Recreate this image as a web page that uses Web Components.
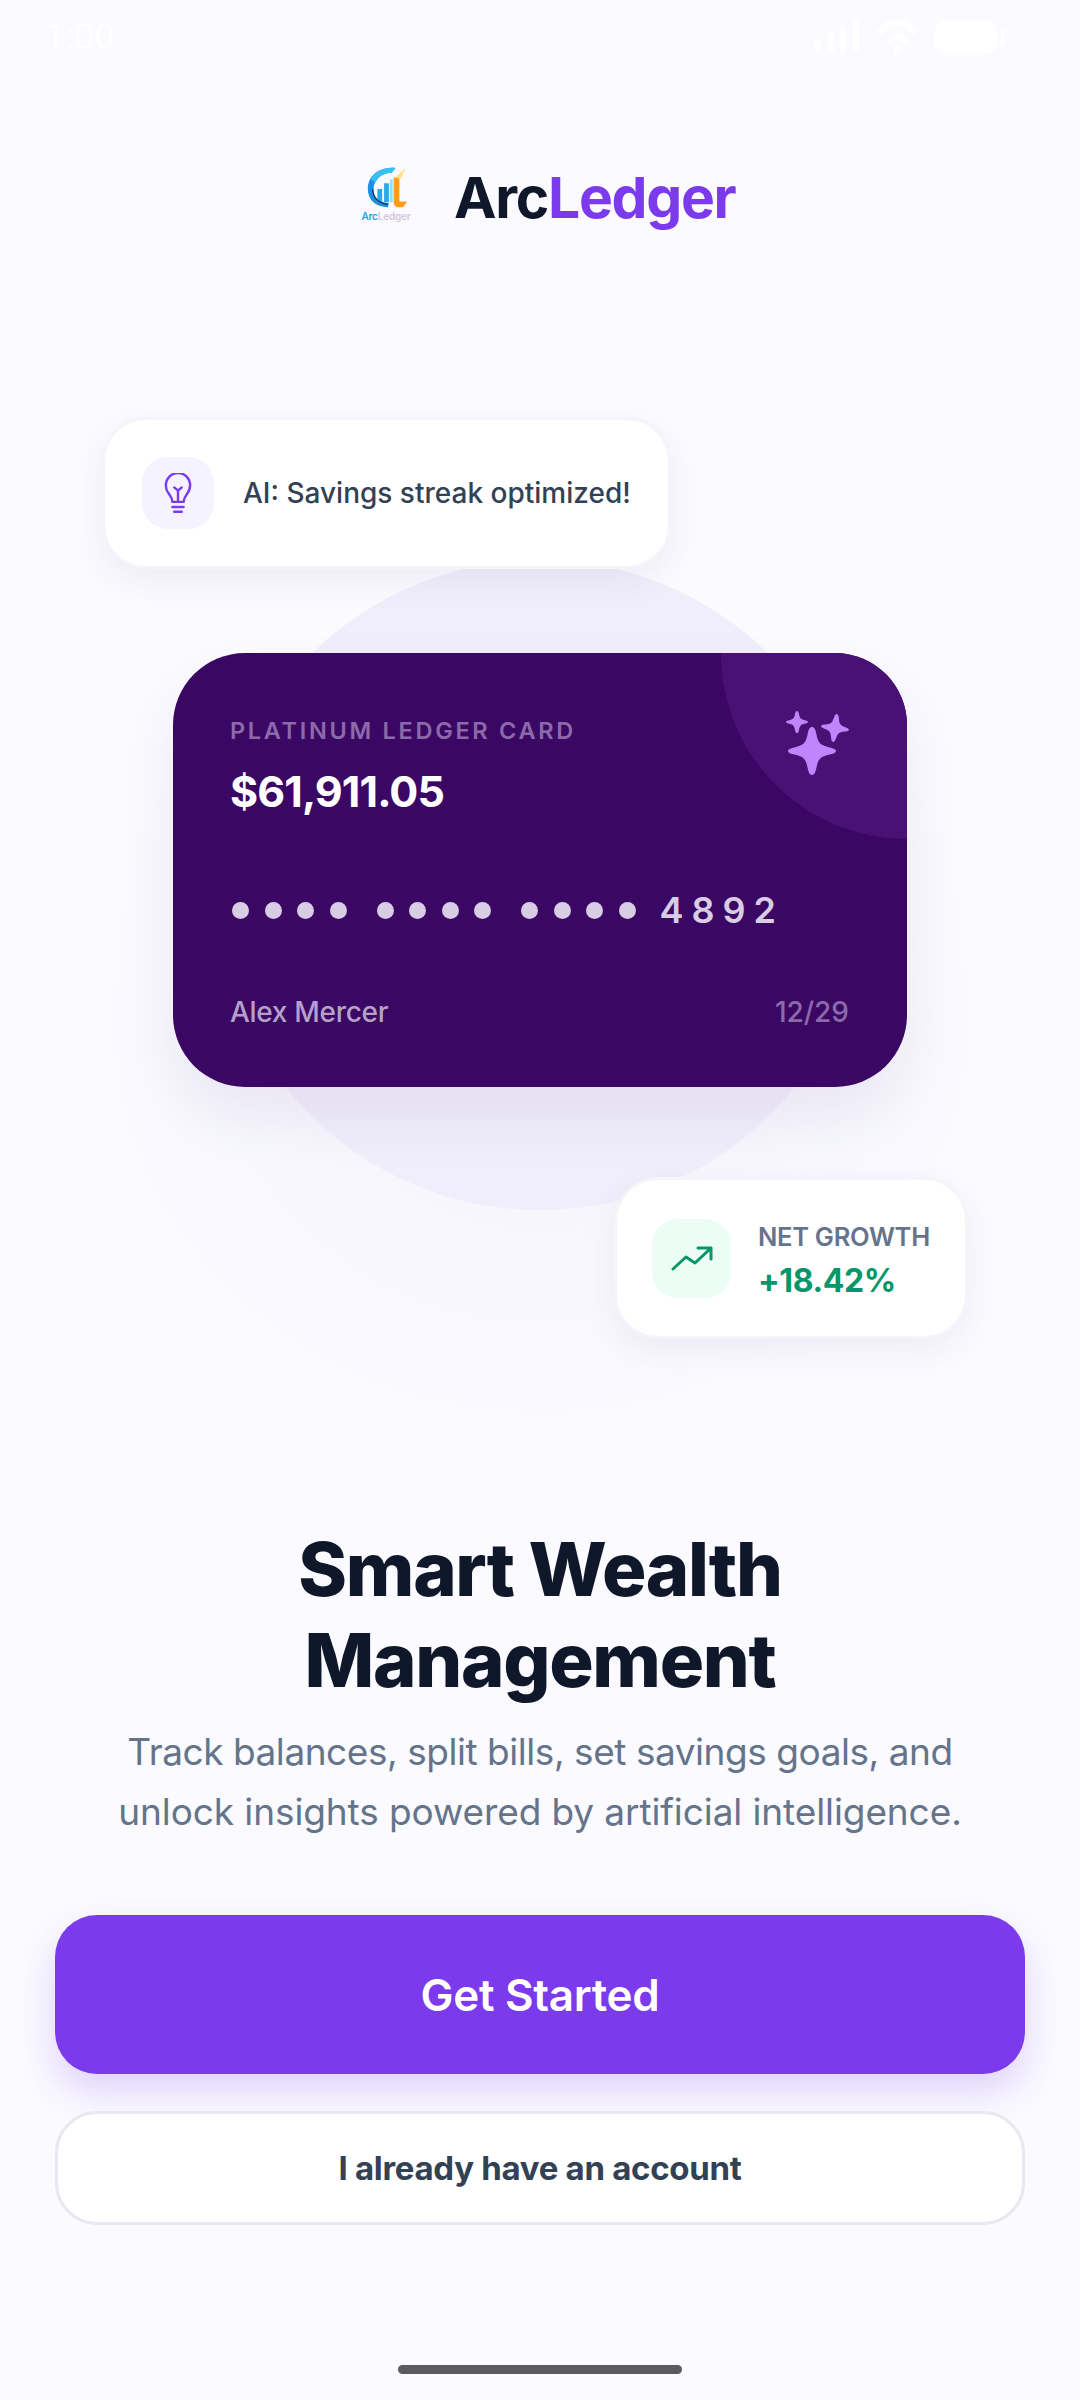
<!DOCTYPE html>
<html lang="en">
<head>
<meta charset="utf-8">
<title>ArcLedger</title>
<style>
  html, body { margin: 0; background: #fafaff; }
  body { font-family: Inter, "Noto Sans", sans-serif; }
</style>
</head>
<body>
<welcome-screen></welcome-screen>

<script>
class StatusBar extends HTMLElement {
  constructor() {
    super();
    this.attachShadow({ mode: 'open' });
    this.shadowRoot.innerHTML = `
      <style>
        :host { display: flex; justify-content: space-between; align-items: center; height: 74px; padding: 0 73px 0 45px; box-sizing: border-box; color: #fff; }
        span { font: 400 36px/1 Roboto, sans-serif; }
        svg { display: block; }
      </style>
      <span>1:00</span>
      <svg width="192" height="34" viewBox="0 0 192 34" fill="#fff">
        <rect x="0" y="20" width="6" height="13" rx="3"/>
        <rect x="13" y="13" width="6" height="20" rx="3"/>
        <rect x="25" y="7" width="6" height="26" rx="3"/>
        <rect x="38" y="1" width="6" height="32" rx="3"/>
        <path d="M61 12a24 24 0 0 1 43 0l-6 4a17 17 0 0 0-31 0z"/>
        <path d="M71 21a13 13 0 0 1 23 0l-5 4a7 7 0 0 0-13 0z"/>
        <rect x="79" y="26" width="7" height="8" rx="3.5"/>
        <rect x="120" y="0" width="62" height="33" rx="9"/>
        <rect x="186" y="9" width="4" height="16" rx="2"/>
      </svg>
    `;
  }
}
customElements.define('status-bar', StatusBar);

class BrandLogo extends HTMLElement {
  constructor() {
    super();
    this.attachShadow({ mode: 'open' });
    this.shadowRoot.innerHTML = `
      <style>
        :host { display: flex; align-items: center; gap: 40px; margin-top: 89px; height: 70px; padding-left: 358px; }
        .mark { width: 56px; display: flex; flex-direction: column; align-items: center; margin-top: -10px; }
        .mark svg { display: block; }
        .mini { font: 600 10px/1 Inter, sans-serif; color: #d5c8da; letter-spacing: -.2px; margin-top: 1px; white-space: nowrap; }
        .mini b { color: #1ea0e8; font-weight: 600; }
        .name { font-size: 57px; font-weight: 700; letter-spacing: -1.3px; color: #0f172a; line-height: 70px; }
        .name em { font-style: normal; color: #7c3aed; }
      </style>
      <div class="mark">
        <svg width="44" height="44" viewBox="0 0 46 46">
          <path d="M33 2C16 1 4 10 4 24c0 11 8 19 21 19l1-4C15 38 10 32 10 24 10 14 19 7 29 7z" fill="#1a8fe3"/>
          <path d="M33 2C22 1 12 5 7 14l5 3C16 10 22 7 29 7z" fill="#35c2f5"/>
          <path d="M14 24h5v14h-5zM21 18h5v20h-5z" fill="#2aa5ee"/>
          <path d="M27 14h3v24h-3z" fill="#8fe0fb"/>
          <path d="M9 24c0 9 6 15 16 16" fill="none" stroke="#1f3b63" stroke-width="1.4"/>
          <path d="M31 12h6v25h8l-4 6H36c-3 0-5-2-5-6z" fill="#ff9d17"/>
          <path d="M34 11l9-9-4 10-2 2z" fill="#ffe27a"/>
        </svg>
        <div class="mini"><b>Arc</b>Ledger</div>
      </div>
      <div class="name">Arc<em>Ledger</em></div>
    `;
  }
}
customElements.define('brand-logo', BrandLogo);

class FloatChip extends HTMLElement {
  constructor() {
    super();
    this.attachShadow({ mode: 'open' });
    this.shadowRoot.innerHTML = `
      <style>
        :host { display: flex; align-items: center; position: absolute; box-sizing: border-box; background: #fff; border: 3px solid #f4f4f9; border-radius: 44px; box-shadow: 0 12px 32px rgba(80, 70, 140, .07); z-index: 2; }
        .icon { flex: none; display: flex; align-items: center; justify-content: center; width: var(--box, 72px); height: var(--box, 72px); border-radius: 26px; background: var(--tint, #f5f3ff); }
      </style>
      <div class="icon"><slot name="icon"></slot></div>
      <slot></slot>
    `;
  }
}
customElements.define('float-chip', FloatChip);

class WalletCard extends HTMLElement {
  constructor() {
    super();
    this.attachShadow({ mode: 'open' });
    this.shadowRoot.innerHTML = `
      <style>
        :host { display: flex; flex-direction: column; position: relative; z-index: 1; box-sizing: border-box; width: 734px; height: 434px; margin: 0 auto; padding: 63px 58px 0 57px; background: #3b0764; border-radius: 72px; overflow: hidden; color: #fff; }
        .corner { position: absolute; top: 0; right: 0; width: 186px; height: 186px; background: #4a1174; border-bottom-left-radius: 100%; }
        .sparkle { position: absolute; top: 43px; right: 57px; }
        .label { font-size: 23.5px; line-height: 30px; font-weight: 600; letter-spacing: 2.7px; color: #8c6aa9; }
        .amount { font-size: 43px; line-height: 52px; font-weight: 700; margin-top: 19px; letter-spacing: -.9px; }
        .number { display: flex; align-items: center; gap: 30px; margin: 71px 0 0 2px; height: 44px; color: #d8cde2; }
        .dots { display: flex; gap: 15.5px; }
        .dots i { display: block; width: 17px; height: 17px; border-radius: 50%; background: currentColor; }
        .tail { font-size: 36px; font-weight: 600; letter-spacing: 8px; margin-left: -6px; }
        .foot { display: flex; justify-content: space-between; align-items: center; margin-top: 62px; font-size: 28px; line-height: 36px; }
        .holder { color: #b5a0c8; font-weight: 500; letter-spacing: -.3px; }
        .expiry { color: #8c6aa9; font-weight: 500; }
      </style>
      <div class="corner"></div>
      <svg class="sparkle" width="70" height="80" viewBox="0 0 70 80" fill="#c084fc">
        <path transform="translate(32 55) scale(24)" d="M0-1C.1-1 .14-.9 .18-.72 .26-.32 .34-.24 .78-.14 .94-.1 1-.06 1 0 1 .06 .94 .1 .78 .14 .34 .24 .26 .32 .18 .72 .14 .9 .1 1 0 1-.1 1-.14 .9-.18 .72-.26 .32-.34 .24-.78 .14-.94 .1-1 .06-1 0-1-.06-.94-.1-.78-.14-.34-.24-.26-.32-.18-.72-.14-.9-.1-1 0-1z"/>
        <path transform="translate(17 26) scale(11)" d="M0-1C.1-1 .14-.9 .18-.72 .26-.32 .34-.24 .78-.14 .94-.1 1-.06 1 0 1 .06 .94 .1 .78 .14 .34 .24 .26 .32 .18 .72 .14 .9 .1 1 0 1-.1 1-.14 .9-.18 .72-.26 .32-.34 .24-.78 .14-.94 .1-1 .06-1 0-1-.06-.94-.1-.78-.14-.34-.24-.26-.32-.18-.72-.14-.9-.1-1 0-1z"/>
        <path transform="translate(55 32) rotate(8) scale(14)" d="M0-1C.1-1 .14-.9 .18-.72 .26-.32 .34-.24 .78-.14 .94-.1 1-.06 1 0 1 .06 .94 .1 .78 .14 .34 .24 .26 .32 .18 .72 .14 .9 .1 1 0 1-.1 1-.14 .9-.18 .72-.26 .32-.34 .24-.78 .14-.94 .1-1 .06-1 0-1-.06-.94-.1-.78-.14-.34-.24-.26-.32-.18-.72-.14-.9-.1-1 0-1z"/>
      </svg>
      <div class="label">PLATINUM LEDGER CARD</div>
      <div class="amount">$61,911.05</div>
      <div class="number">
        <div class="dots"><i></i><i></i><i></i><i></i></div>
        <div class="dots"><i></i><i></i><i></i><i></i></div>
        <div class="dots"><i></i><i></i><i></i><i></i></div>
        <div class="tail">4892</div>
      </div>
      <div class="foot"><span class="holder">Alex Mercer</span><span class="expiry">12/29</span></div>
    `;
  }
}
customElements.define('wallet-card', WalletCard);

class HeroStage extends HTMLElement {
  constructor() {
    super();
    this.attachShadow({ mode: 'open' });
    this.shadowRoot.innerHTML = `
      <style>
        :host { display: block; position: relative; height: 1295px; padding-top: 420px; box-sizing: border-box; }
        .halo { position: absolute; left: 215px; top: 327px; width: 650px; height: 650px; border-radius: 50%; background: #f0eefb; }
        .glow { position: absolute; left: 70px; top: 358px; width: 940px; height: 860px; border-radius: 50%; background: radial-gradient(closest-side, rgba(120,110,190,.05), rgba(120,110,190,0)); }
        wallet-card { box-shadow: 0 30px 60px rgba(59, 7, 100, .07); }
        .tip { left: 102px; top: 184px; width: 569px; height: 152px; padding-left: 37px; }
        .tip span { margin-left: 29px; font-size: 28px; font-weight: 500; letter-spacing: 0; color: #334155; white-space: nowrap; }
        .growth { left: 614px; top: 944px; width: 354px; height: 162px; padding-left: 35px; --box: 79px; --tint: #ecfdf5; }
        .figures { margin-left: 27px; padding-top: 6px; }
        .figures div:first-child { font-size: 25.5px; line-height: 34px; font-weight: 600; letter-spacing: -.3px; color: #64748b; }
        .figures div:last-child { font-size: 32px; line-height: 42px; margin-top: 6px; font-weight: 700; letter-spacing: -.4px; color: #059669; }
      </style>
      <div class="glow"></div>
      <div class="halo"></div>
      <float-chip class="tip">
        <svg slot="icon" width="28" height="41" viewBox="0 0 30 44" fill="none" stroke="#7c3aed" stroke-width="2.6" stroke-linecap="round" stroke-linejoin="round">
          <path d="M9 31c0-4-2-6-4-9a13.500 13.500 0 0 1-3-9 13 13 0 0 1 26 0c0 3.500-1 6.500-3 9-2 3-4 5-4 9z"/>
          <path d="M9 36.500h12M11 41.500h8M15 31V19M11 15.500l4 3.500 4-3.500"/>
        </svg>
        <span>AI: Savings streak optimized!</span>
      </float-chip>
      <wallet-card></wallet-card>
      <float-chip class="growth">
        <svg slot="icon" width="42" height="26" viewBox="0 0 42 26" fill="none" stroke="#059669" stroke-width="3" stroke-linecap="round" stroke-linejoin="round">
          <path d="M2 24l13-12 9 6L40 3M27 3h13v11"/>
        </svg>
        <div class="figures"><div>NET GROWTH</div><div>+18.42%</div></div>
      </float-chip>
    `;
  }
}
customElements.define('hero-stage', HeroStage);

class IntroCopy extends HTMLElement {
  constructor() {
    super();
    this.attachShadow({ mode: 'open' });
    this.shadowRoot.innerHTML = `
      <style>
        :host { display: block; text-align: center; margin-top: -4px; }
        h1 { margin: 0; font-size: 74px; line-height: 91px; font-weight: 800; letter-spacing: -1.3px; color: #0f172a; }
        p { margin: 16px 0 0; font-size: 37px; line-height: 60px; font-weight: 400; letter-spacing: -.1px; color: #64748b; }
        ::slotted(.tight) { letter-spacing: -.45px; }
      </style>
      <h1><slot name="title"></slot></h1>
      <p><slot></slot></p>
    `;
  }
}
customElements.define('intro-copy', IntroCopy);

class ActionButton extends HTMLElement {
  constructor() {
    super();
    this.attachShadow({ mode: 'open' });
    this.shadowRoot.innerHTML = `
      <style>
        :host { display: flex; align-items: center; justify-content: center; box-sizing: border-box; border-radius: 42px; cursor: pointer; }
        :host([variant="primary"]) { height: 159px; background: #7c3aed; color: #fff; font-size: 44px; font-weight: 600; letter-spacing: -.3px; box-shadow: 0 18px 36px rgba(124, 58, 237, .2); }
        :host([variant="outline"]) { height: 114px; background: #fff; color: #334155; border: 3px solid #e7e8f0; font-size: 33px; font-weight: 700; letter-spacing: -.3px; }
      </style>
      <slot></slot>
    `;
  }
}
customElements.define('action-button', ActionButton);

class WelcomeScreen extends HTMLElement {
  constructor() {
    super();
    this.attachShadow({ mode: 'open' });
    this.shadowRoot.innerHTML = `
      <style>
        :host { display: flex; flex-direction: column; width: 1080px; height: 2400px; overflow: hidden; background: #fafaff; }
        .actions { display: flex; flex-direction: column; gap: 37px; padding: 0 55px; margin-top: 73px; }
        .home { width: 284px; height: 9px; border-radius: 5px; background: #5b5b60; margin: 140px auto 0; }
      </style>
      <status-bar></status-bar>
      <brand-logo></brand-logo>
      <hero-stage></hero-stage>
      <intro-copy>
        <span slot="title">Smart Wealth<br>Management</span>
        <span class="tight">Track balances, split bills, set savings goals, and</span><br>unlock insights powered by artificial intelligence.
      </intro-copy>
      <div class="actions">
        <action-button variant="primary">Get Started</action-button>
        <action-button variant="outline">I already have an account</action-button>
      </div>
      <div class="home"></div>
    `;
  }
}
customElements.define('welcome-screen', WelcomeScreen);
</script>
</body>
</html>
